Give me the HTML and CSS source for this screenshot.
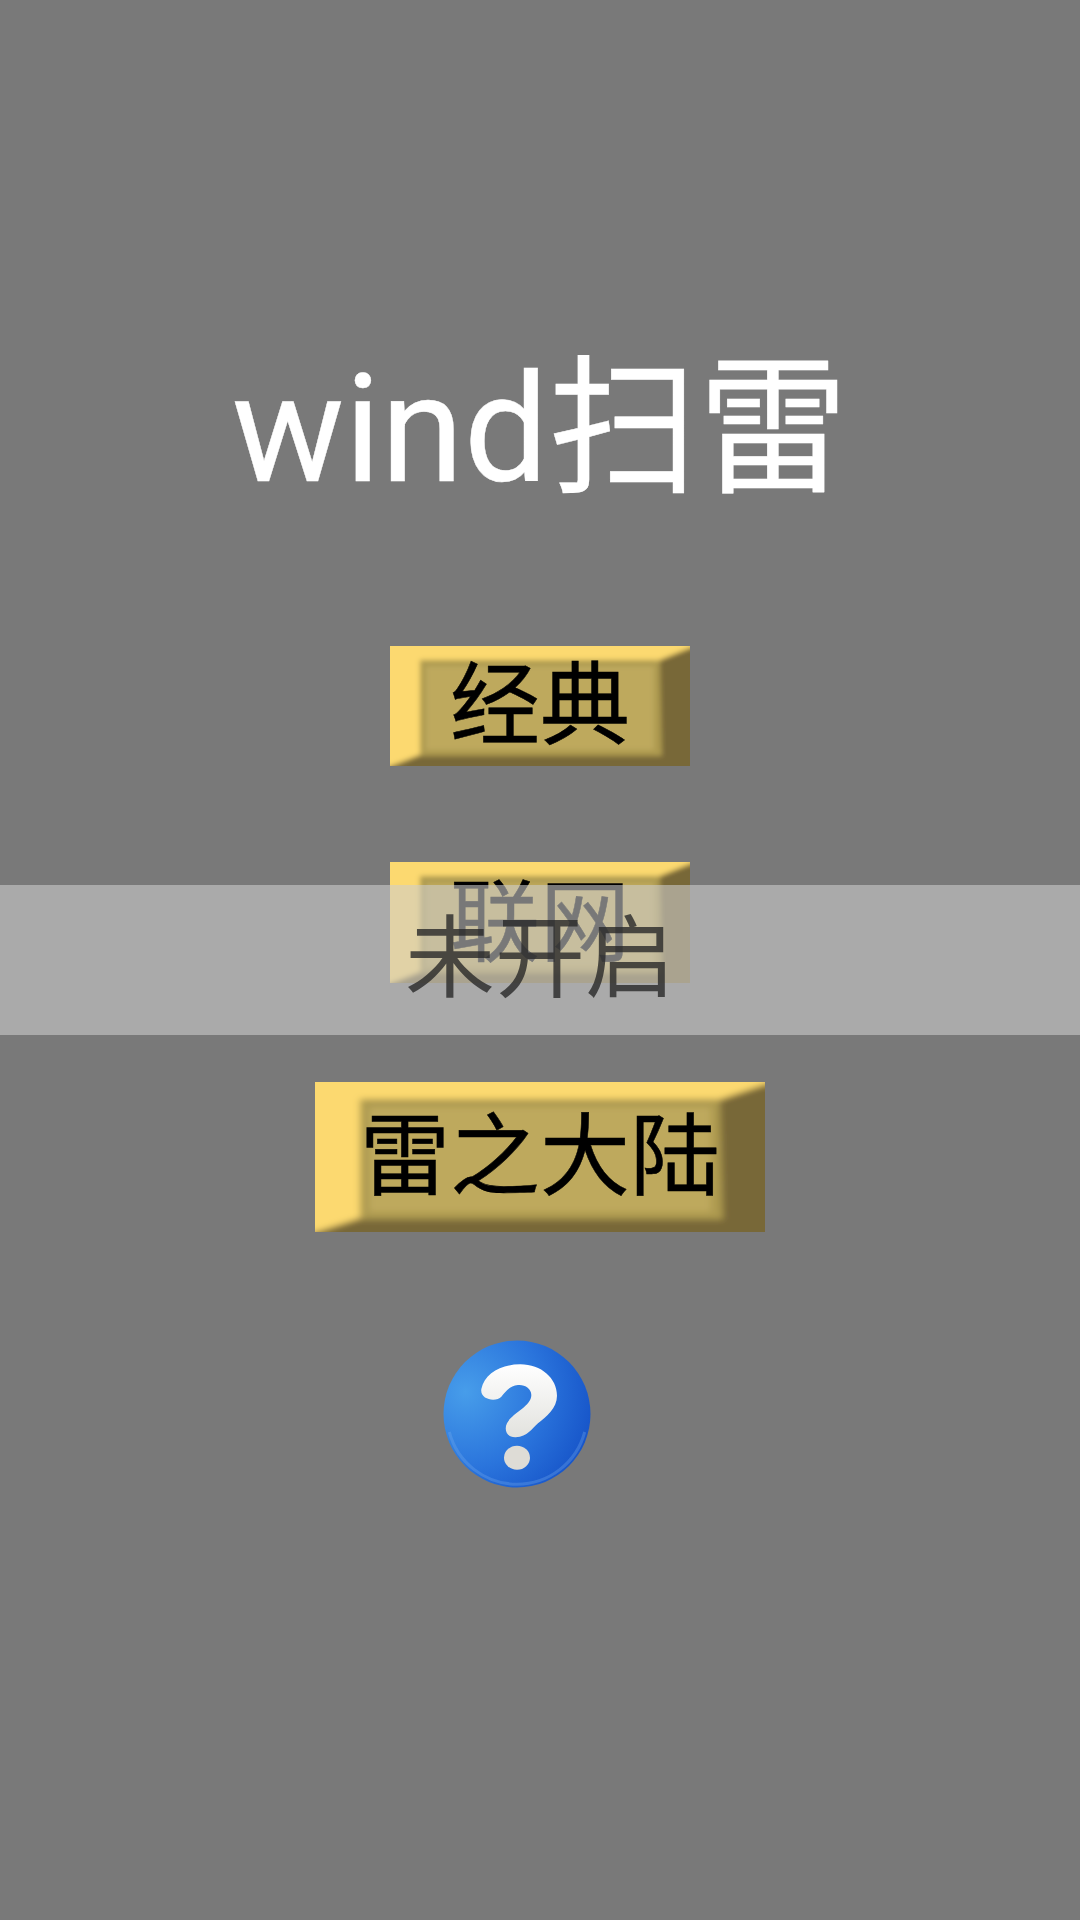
FILE: index.html
```html
<!DOCTYPE html>
<html lang="zh-CN">
<head>
<meta charset="utf-8">
<title>wind扫雷</title>
<link rel="stylesheet" href="styles.css">
</head>
<body>
<svg class="defs" width="0" height="0" aria-hidden="true">
  <defs>
    <filter id="soft" x="-10%" y="-20%" width="120%" height="140%"><feGaussianBlur stdDeviation="2.6"/></filter>
    <symbol id="bevel" viewBox="0 0 300 120" preserveAspectRatio="none">
      <g filter="url(#soft)">
        <rect x="-20" y="-20" width="340" height="160" fill="#786839"/>
        <polygon points="-20,-20 320,-20 320,-6 270,14 30,14 30,109 -20,128" fill="#fcd970"/>
        <polygon points="30,14 270,14 272,110 30,110" fill="#ad9a50"/>
        <polygon points="36,20 264,20 264,104 36,104" fill="#bea95d"/>
      </g>
    </symbol>
    <radialGradient id="orb" cx="15%" cy="35%" r="95%">
      <stop offset="0" stop-color="#479dea"/>
      <stop offset=".55" stop-color="#2a74dc"/>
      <stop offset="1" stop-color="#1450c6"/>
    </radialGradient>
    <linearGradient id="mark" x1="0" y1="0" x2="0" y2="1">
      <stop offset="0" stop-color="#ffffff"/>
      <stop offset="1" stop-color="#e2e2de"/>
    </linearGradient>
  </defs>
</svg>
<main class="screen">
  <h1 class="title">wind扫雷</h1>
  <button class="btn btn-small"><svg class="bevel"><use href="#bevel"/></svg><span class="label">经典</span></button>
  <button class="btn btn-small btn-net"><svg class="bevel"><use href="#bevel"/></svg><span class="label">联网</span></button>
  <button class="btn btn-wide"><svg class="bevel"><use href="#bevel"/></svg><span class="label">雷之大陆</span></button>
  <svg class="help" viewBox="0 0 148 148" aria-label="帮助">
    <circle cx="74" cy="74" r="73.500" fill="url(#orb)"/>
    <path d="M6.300 92A70 70 0 0 0 141.700 92" fill="none" stroke="#7ab0ee" stroke-width="3" opacity=".3"/>
    <g transform="scale(.33333) translate(-40 -45)">
      <path d="M155 192C165 145 215 118 272 118C335 118 382 160 382 212C382 250 350 275 325 295C305 312 295 335 258 337C232 338 222 315 232 295C245 265 305 245 305 210C305 190 285 178 265 180C240 182 228 200 215 215C200 232 150 225 155 192Z" fill="url(#mark)"/>
      <ellipse cx="262" cy="398" rx="39" ry="36" fill="#dedcd6"/>
    </g>
  </svg>
  <div class="toast"><span class="toast-text">未开启</span></div>
</main>
</body>
</html>
```
FILE: styles.css
```css
* { box-sizing: border-box; }
html, body { margin: 0; padding: 0; }
body { width: 1080px; height: 1920px; background: #797979; overflow: hidden; }
.defs { position: absolute; }
.screen {
  position: relative;
  width: 1080px;
  height: 1920px;
  display: flex;
  flex-direction: column;
  align-items: center;
  padding-top: 342px;
  font-family: Roboto, "Noto Sans CJK SC", sans-serif;
}
.title {
  margin: 0;
  height: 176px;
  font-size: 150px;
  line-height: 176px;
  font-weight: 400;
  color: #fff;
  white-space: nowrap;
  -webkit-text-stroke: .4px #fff;
}
.btn {
  position: relative;
  display: flex;
  align-items: center;
  justify-content: center;
  padding: 2px 0 0;
  border: 0;
  background: none;
  color: #000;
  font-family: inherit;
  font-size: 90px;
}
.btn-small { width: 300px; height: 120px; margin-top: 128px; }
.btn-net { height: 121px; margin-top: 96px; }
.btn-wide { width: 450px; height: 150px; margin-top: 99px; }
.bevel { position: absolute; inset: 0; width: 100%; height: 100%; }
.label { position: relative; line-height: 1; white-space: nowrap; -webkit-text-stroke: .5px #000; }
.help { width: 148px; height: 148px; margin-top: 108px; margin-right: 46px; }
.toast {
  position: absolute;
  left: 0;
  top: 885px;
  width: 1080px;
  height: 150px;
  display: flex;
  align-items: center;
  justify-content: center;
  background: rgba(205, 205, 205, .585);
}
.toast-text { font-size: 90px; line-height: 1; color: rgba(40, 40, 40, .8); }
```
